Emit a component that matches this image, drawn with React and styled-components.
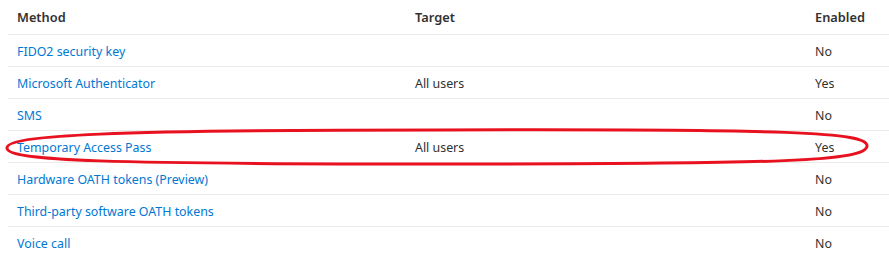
import React from 'react';
import styled, { createGlobalStyle } from 'styled-components';

const GlobalStyle = createGlobalStyle`
  body {
    margin: 0;
    background: #ffffff;
    font-family: "Noto Sans", "Open Sans", sans-serif;
  }
`;

const methods = [
  { name: 'FIDO2 security key', target: '', enabled: 'No' },
  { name: 'Microsoft Authenticator', target: 'All users', enabled: 'Yes' },
  { name: 'SMS', target: '', enabled: 'No' },
  { name: 'Temporary Access Pass', target: 'All users', enabled: 'Yes' },
  { name: 'Hardware OATH tokens (Preview)', target: '', enabled: 'No' },
  { name: 'Third-party software OATH tokens', target: '', enabled: 'No' },
  { name: 'Voice call', target: '', enabled: 'No' },
];

export default function App() {
  return (
    <Page>
      <GlobalStyle />
      <Table>
        <HeaderRow>
          <HeadCell>Method</HeadCell>
          <HeadCell>Target</HeadCell>
          <HeadCell>Enabled</HeadCell>
        </HeaderRow>
        {methods.map((m) => (
          <Row key={m.name}>
            <Cell><Link href="#">{m.name}</Link></Cell>
            <Cell>{m.target}</Cell>
            <Cell>{m.enabled}</Cell>
          </Row>
        ))}
      </Table>
      <Highlight width="889" height="256" viewBox="0 0 889 256">
        <path
          d="M440 130 C 790 129, 868 132, 867 146 C 866 161, 790 164, 440 164 C 110 164, 7 161, 7 148 C 7 135, 110 130, 440 130 Z"
          fill="none"
          stroke="#e8111f"
          strokeWidth="3"
        />
      </Highlight>
    </Page>
  );
}

const Page = styled.div`
  position: relative;
  width: 889px;
  height: 256px;
  overflow: hidden;
  padding-left: 8px;
  box-sizing: border-box;
`;

const Table = styled.div`
  display: flex;
  flex-direction: column;
`;

const HeaderRow = styled.div`
  display: grid;
  grid-template-columns: 398px 400px 1fr;
  height: 34px;
  align-items: center;
  border-bottom: 1px solid #edebe9;
`;

const Row = styled(HeaderRow)`
  height: 31px;
`;

const HeadCell = styled.div`
  padding-left: 9px;
  font-size: 12.8px;
  font-weight: 600;
  color: #323130;
`;

const Cell = styled.div`
  padding-left: 9px;
  padding-top: 2px;
  font-size: 12.4px;
  color: #323130;
  white-space: nowrap;
`;

const Link = styled.a`
  color: #0078d4;
  text-decoration: none;
`;

const Highlight = styled.svg`
  position: absolute;
  left: 0;
  top: 0;
  pointer-events: none;
`;
